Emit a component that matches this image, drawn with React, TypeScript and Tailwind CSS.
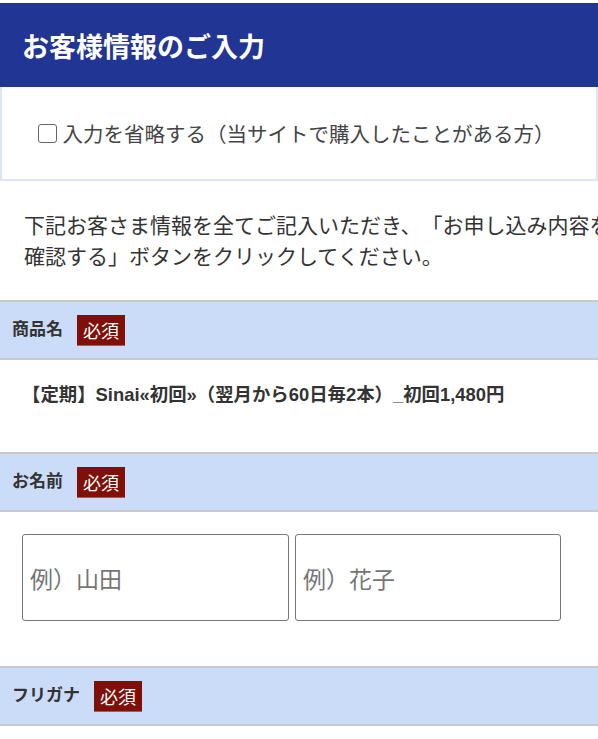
import React from 'react';

const jp = { fontFamily: '"Noto Sans CJK JP", "Noto Sans", sans-serif' };
const bold = { fontFamily: '"Liberation Sans", "Noto Sans CJK JP", sans-serif' };

const Required: React.FC = () => (
  <span className="inline-flex items-center justify-center w-[48px] h-[31px] bg-[#7f1008] border-b border-[#a85a56] text-white text-[18px] leading-none" style={jp}>
    必須
  </span>
);

const SectionHead: React.FC<{ label: string }> = ({ label }) => (
  <div className="h-[60px] border-y-2 border-[#c9c9c9] bg-[#cadcf8] flex items-center pl-[12px]">
    <span className="text-[17px] font-bold text-[#333] mr-[14px]" style={bold}>{label}</span>
    <Required />
  </div>
);

const App: React.FC = () => {
  return (
    <div className="w-[598px] min-h-[739px] overflow-hidden bg-white pt-[3px] [text-spacing-trim:space-all]" style={jp}>
      {/* タイトル */}
      <div className="h-[84px] bg-[#213594] flex items-center pl-[22px]">
        <h1 className="text-[27px] font-bold text-white leading-none" style={jp}>お客様情報のご入力</h1>
      </div>

      {/* 入力省略 */}
      <div className="h-[94px] border-2 border-t-0 border-[#dde7f4] flex items-center justify-center">
        <label className="flex items-center gap-[6px] text-[20.5px] text-[#444] -ml-[6px]">
          <span className="w-[19px] h-[19px] border-[1.5px] border-[#666] rounded-[3px] bg-white" />
          入力を省略する（当サイトで購入したことがある方）
        </label>
      </div>

      {/* 説明 */}
      <div className="pl-[24px] pt-[28px] pb-[29px] text-[21px] leading-[31px] text-[#333] whitespace-nowrap">
        <p>下記お客さま情報を全てご記入いただき、「お申し込み内容を</p>
        <p>確認する」ボタンをクリックしてください。</p>
      </div>

      <SectionHead label="商品名" />
      <div className="h-[92px] pl-[22px] pt-[22px]">
        <p className="text-[18.4px] leading-[26px] font-bold text-[#333]" style={bold}>
          【定期】Sinai«初回»（翌月から60日毎2本）_初回1,480円
        </p>
      </div>

      <SectionHead label="お名前" />
      <div className="h-[154px] pl-[22px] pt-[22px] flex gap-[6px]">
        <input
          placeholder="例）山田"
          className="w-[267px] h-[87px] border border-[#767676] rounded-[3px] px-[7px] text-[23px] placeholder:text-[#757575]"
          style={jp}
        />
        <input
          placeholder="例）花子"
          className="w-[266px] h-[87px] border border-[#767676] rounded-[3px] px-[7px] text-[23px] placeholder:text-[#757575]"
          style={jp}
        />
      </div>

      <SectionHead label="フリガナ" />
    </div>
  );
};

export default App;
